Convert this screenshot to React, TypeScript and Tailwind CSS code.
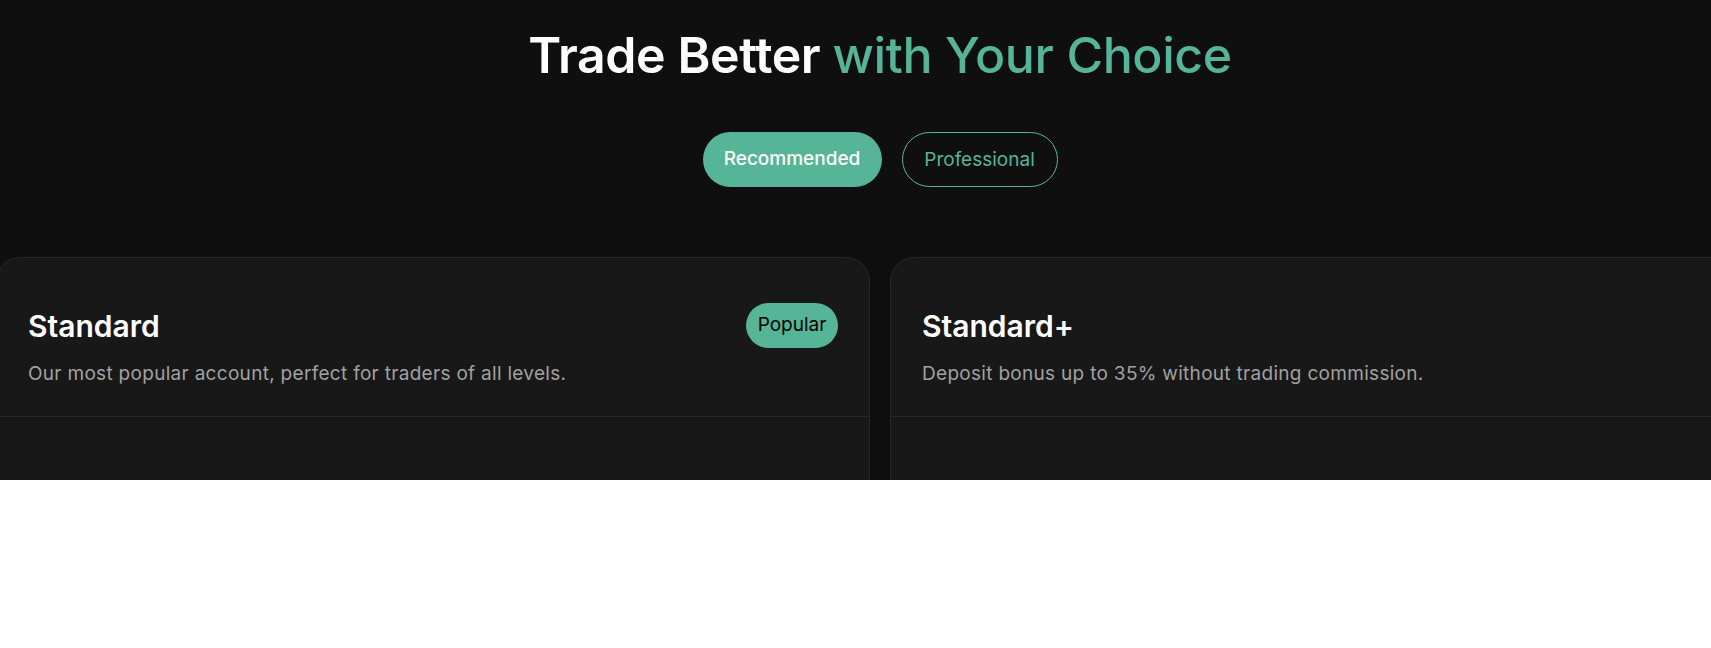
import React from "react";

type Plan = {
  name: string;
  description: string;
  badge?: string;
};

const plans: Plan[] = [
  {
    name: "Standard",
    description: "Our most popular account, perfect for traders of all levels.",
    badge: "Popular",
  },
  {
    name: "Standard+",
    description: "Deposit bonus up to 35% without trading commission.",
  },
];

function PlanCard({ plan }: { plan: Plan }) {
  return (
    <div className="flex-1 rounded-t-[24px] border border-[#262626] bg-[#181818] h-[260px]">
      <div className="border-b border-[#262626] px-[31px] pt-[45px] pb-[28px]">
        <div className="flex h-[45px] items-center justify-between">
          <h3 className="text-[30px] font-semibold leading-[36px] text-white">{plan.name}</h3>
          {plan.badge && (
            <span className="flex h-[45px] w-[92px] items-center justify-center rounded-full bg-[#56b596] text-[19px] text-black">
              {plan.badge}
            </span>
          )}
        </div>
        <p className="mt-3 text-[19px] leading-[28px] tracking-[0.3px] text-[#a1a1a1]">{plan.description}</p>
      </div>
    </div>
  );
}

export default function App() {
  return (
    <div className="w-full overflow-hidden" style={{ fontFamily: "Inter, 'Noto Sans', sans-serif" }}>
      <section className="h-[480px] overflow-hidden bg-[#0f0f0f]">
        <div className="-ml-1 w-[1768px]">
          <h2 className="pt-[25px] text-center text-[50px] leading-[60px] tracking-[-0.4px]">
            <span className="font-semibold text-white">Trade Better </span>
            <span className="font-medium text-[#56b596]">with Your Choice</span>
          </h2>

          <div className="mt-[47px] flex justify-center gap-5">
            <button className="flex h-[55px] w-[179px] items-center justify-center rounded-full bg-[#56b596] text-[19px] font-medium text-white">
              Recommended
            </button>
            <button className="flex h-[55px] w-[156px] items-center justify-center rounded-full border border-[#56b596] pt-[2px] text-[19px] text-[#56b596]">
              Professional
            </button>
          </div>

          <div className="mt-[70px] flex gap-5">
            {plans.map((plan) => (
              <PlanCard key={plan.name} plan={plan} />
            ))}
          </div>
        </div>
      </section>
    </div>
  );
}
